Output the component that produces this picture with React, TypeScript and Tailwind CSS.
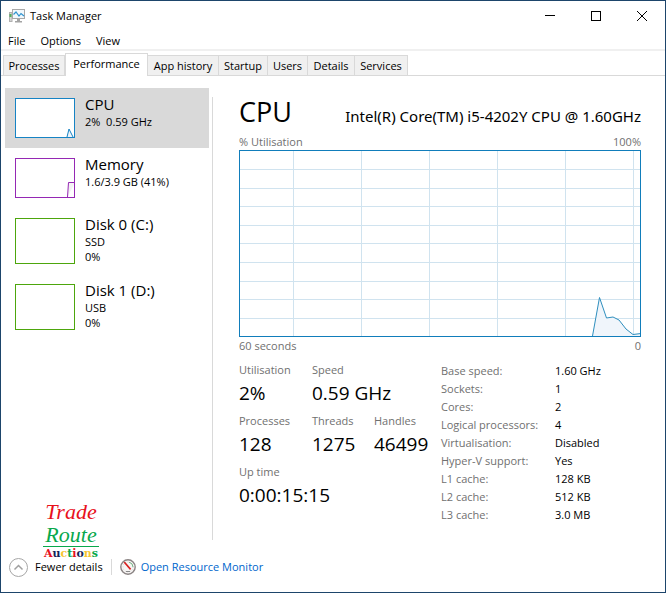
import React, { useState } from 'react';

const TABS = [
  { label: 'Processes', width: 'w-[62px]' },
  { label: 'Performance', width: 'w-[83px]' },
  { label: 'App history', width: 'w-[71px]' },
  { label: 'Startup', width: 'w-[49px]' },
  { label: 'Users', width: 'w-[40px]' },
  { label: 'Details', width: 'w-[47px]' },
  { label: 'Services', width: 'w-[53px]' },
];

const DEVICES = [
  { name: 'CPU', lines: ['2%  0.59 GHz'], color: '#1683c4', fill: '#eef4fa', path: 'M52 39 L54 31 L58 39', height: 40 },
  { name: 'Memory', lines: ['1.6/3.9 GB (41%)'], color: '#9528b4', fill: '#f4f2f4', path: 'M52.500 39 L53.500 24.500 L60 24.500', height: 40 },
  { name: 'Disk 0 (C:)', lines: ['SSD', '0%'], color: '#4da60c', fill: 'none', path: '', height: 46 },
  { name: 'Disk 1 (D:)', lines: ['USB', '0%'], color: '#4da60c', fill: 'none', path: '', height: 46 },
];

const DETAILS = [
  ['Base speed:', '1.60 GHz'],
  ['Sockets:', '1'],
  ['Cores:', '2'],
  ['Logical processors:', '4'],
  ['Virtualisation:', 'Disabled'],
  ['Hyper-V support:', 'Yes'],
  ['L1 cache:', '128 KB'],
  ['L2 cache:', '512 KB'],
  ['L3 cache:', '3.0 MB'],
];

const GRID_X = [54, 122, 190, 258, 326, 394];
const GRID_Y = [19, 38, 56, 75, 93, 112, 131, 149, 168];

const AUCTIONS = [
  ['A', 'text-[#e8111c]'],
  ['u', 'text-[#14235a]'],
  ['c', 'text-[#f7c531]'],
  ['t', 'text-[#08a84c]'],
  ['i', 'text-[#e8111c]'],
  ['o', 'text-[#14235a]'],
  ['n', 'text-[#f7c531]'],
  ['s', 'text-[#08a84c]'],
];

const AppIcon = () => (
  <svg width="17" height="16" viewBox="0 0 17 16" aria-hidden="true">
    <rect x="0.5" y="4.500" width="2.500" height="9" fill="#d5d5d5" stroke="#b0b0b0" />
    <rect x="0.500" y="6" width="2" height="3" fill="#4fae5b" />
    <rect x="3.500" y="1.500" width="12" height="9" fill="#f1f8fc" stroke="#a8a8a8" />
    <path d="M4.500 6.500 L7 4 L10 8 L12 5.500 L15 8" fill="none" stroke="#2f93cf" strokeWidth="1.200" />
    <path d="M8 11 h3 v2 h2 v1.500 h-7 v-1.500 h2z" fill="#a3a3a3" />
  </svg>
);

const GaugeIcon = () => (
  <svg width="16" height="16" viewBox="0 0 16 16" aria-hidden="true">
    <circle cx="8" cy="8" r="7.200" fill="#f7f5f4" stroke="#8b8484" strokeWidth="1.400" />
    <circle cx="8" cy="8" r="5" fill="none" stroke="#d5d2d2" strokeDasharray="1 1.500" />
    <path d="M9 3.200 A5 5 0 0 1 13 8" fill="none" stroke="#78b88a" />
    <path d="M3.500 3.500 L5 2.800 L11.200 9.800 L10 11 Z" fill="#d81e1e" />
    <path d="M6 12.500 h4" stroke="#8a8a8a" />
  </svg>
);

const Stat = ({ label, value, className = '' }: { label: string; value: string; className?: string }) => (
  <div className={className}>
    <dt className="leading-4 text-[#707070]">{label}</dt>
    <dd className="text-[19px] leading-[30px]">{value}</dd>
  </div>
);

const App: React.FC = () => {
  const [tab, setTab] = useState('Performance');
  const [device, setDevice] = useState('CPU');

  return (
    <div className="flex min-h-screen flex-col border border-[#1d456b] bg-white font-['Open_Sans','Noto_Sans',sans-serif] text-[11px] leading-4 text-black">
      {/* Title bar */}
      <header className="flex h-[30px] items-center pl-2">
        <AppIcon />
        <h1 className="ml-1 flex-1">Task Manager</h1>
        <button aria-label="Minimise" className="flex h-full w-[46px] items-center justify-center">
          <svg width="10" height="10"><path d="M0 4.500 h10" stroke="black" /></svg>
        </button>
        <button aria-label="Maximise" className="flex h-full w-[46px] items-center justify-center">
          <svg width="10" height="10"><rect x="0.5" y="0.5" width="9" height="9" fill="none" stroke="black" /></svg>
        </button>
        <button aria-label="Close" className="flex h-full w-[46px] items-center justify-center">
          <svg width="10" height="10"><path d="M0 0 L10 10 M10 0 L0 10" stroke="black" /></svg>
        </button>
      </header>

      <nav className="flex h-5 items-center gap-[15px] border-b-2 border-[#f0f0f0] pl-[7px] pt-[2px]">
        <button>File</button>
        <button>Options</button>
        <button>View</button>
      </nav>

      <div role="tablist" className="flex h-[25px] items-end border-b border-[#d9d9d9] pl-[2px]">
        {TABS.map((t) => (
          <button
            key={t.label}
            role="tab"
            aria-selected={tab === t.label}
            onClick={() => setTab(t.label)}
            className={`${t.width} shrink-0 whitespace-nowrap border border-b-0 border-[#d9d9d9] text-center ${
              tab === t.label ? '-mb-px h-[23px] bg-white pb-[2px]' : 'h-5 border-l-0 bg-[#f0f0f0] first:border-l'
            }`}
          >
            {t.label}
          </button>
        ))}
      </div>

      <main className="flex flex-1 pt-3">
        {/* Device list */}
        <aside className="flex w-[211px] shrink-0 flex-col pl-1 pr-[3px]">
          {DEVICES.map((d) => (
            <button
              key={d.name}
              onClick={() => setDevice(d.name)}
              className={`flex items-start gap-[10px] px-[10px] pt-[10px] text-left ${d.lines.length > 1 ? 'h-[66px]' : 'h-[60px]'} ${
                device === d.name ? 'bg-[#d9d9d9]' : ''
              }`}
            >
              <svg width="60" height={d.height} className="shrink-0 bg-white" aria-hidden="true">
                {d.path && <path d={d.path} fill={d.fill} stroke={d.color} />}
                <rect x="0.5" y="0.5" width="59" height={d.height - 1} fill="none" stroke={d.color} />
              </svg>
              <span className="-mt-1 flex flex-col">
                <span className="text-[15px] leading-5">{d.name}</span>
                {d.lines.map((line) => (
                  <span key={line} className="whitespace-pre leading-[15px]">{line}</span>
                ))}
              </span>
            </button>
          ))}
          {/* Shop logo, hangs a little below the list */}
          <div className="mt-auto mb-[-21px] ml-[38px] flex w-[56px] flex-col items-center font-['Liberation_Serif',serif] text-[22px] italic leading-[23px]">
            <span className="text-[#e8111c]">Trade</span>
            <span className="text-[#08a84c]">Route</span>
            <span className="w-full border-t border-[#08a84c] text-center font-['DejaVu_Serif',serif] text-[11px] font-bold not-italic leading-[14px]">
              {AUCTIONS.map(([char, color], i) => (
                <span key={i} className={color}>{char}</span>
              ))}
            </span>
          </div>
        </aside>

        <section className="mt-[9px] flex-1 border-l border-[#d9d9d9] pl-[26px] pr-6">
          <div className="-mt-[5px] flex items-baseline justify-between">
            <h2 className="text-[27px] leading-10">CPU</h2>
            <p className="font-['Noto_Sans',sans-serif] text-[15px]">Intel(R) Core(TM) i5-4202Y CPU @ 1.60GHz</p>
          </div>
          <div className="flex justify-between pt-[2px] text-[#707070]">
            <span>% Utilisation</span>
            <span>100%</span>
          </div>
          <svg viewBox="0 0 402 187" className="block w-full" role="img" aria-label="CPU utilisation">
            <g stroke="#d0e3ef">
              {GRID_X.map((x) => <path key={x} d={`M${x + 0.5} 0 V187`} />)}
              {GRID_Y.map((y) => <path key={y} d={`M0 ${y + 0.5} H402`} />)}
            </g>
            <path
              d="M353.500 186 L360.500 147.500 L367.500 168 L374 167 L380 170 L387 179 L394 184.500 L402 183.500 V187 H353.500z"
              fill="#f0f5fb"
              stroke="#2f8fbe"
            />
            <rect x="0.5" y="0.5" width="401" height="186" fill="none" stroke="#117dbb" />
          </svg>
          <div className="flex justify-between pt-px text-[#707070]">
            <span>60 seconds</span>
            <span>0</span>
          </div>

          <div className="flex pt-2">
            <dl className="grid w-[202px] shrink-0 grid-cols-[73px_62px_67px] content-start gap-y-[5px]">
              <Stat label="Utilisation" value="2%" />
              <Stat label="Speed" value="0.59 GHz" className="col-span-2" />
              <Stat label="Processes" value="128" />
              <Stat label="Threads" value="1275" />
              <Stat label="Handles" value="46499" />
              <Stat label="Up time" value="0:00:15:15" className="col-span-3" />
            </dl>
            <table className="h-min leading-[18px]">
              <tbody>
                {DETAILS.map(([label, value]) => (
                  <tr key={label}>
                    <th className="w-[114px] p-0 text-left font-normal text-[#707070]">{label}</th>
                    <td className="whitespace-nowrap p-0">{value}</td>
                  </tr>
                ))}
              </tbody>
            </table>
          </div>
        </section>
      </main>

      <footer className="flex h-[52px] items-center pl-2 pt-[2px]">
        <button className="flex items-center gap-[7px]">
          <svg width="19" height="19" aria-hidden="true">
            <circle cx="9.500" cy="9.500" r="9" fill="white" stroke="#a6a6a6" />
            <path d="M5.500 11.500 L9.500 7.500 L13.500 11.500" fill="none" stroke="#a0a0a0" strokeWidth="1.500" />
          </svg>
          Fewer details
        </button>
        <span className="mx-2 h-4 border-l border-[#d9d9d9]" />
        <a href="#resmon" className="flex items-center gap-[5px] text-[#0066cc]">
          <GaugeIcon />
          Open Resource Monitor
        </a>
      </footer>
    </div>
  );
};

export default App;
